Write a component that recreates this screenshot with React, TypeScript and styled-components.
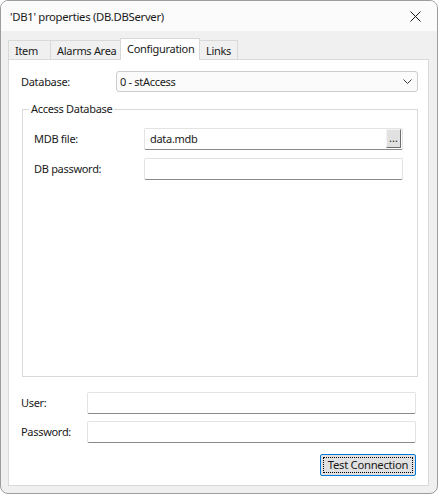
import React from "react";
import styled, { createGlobalStyle, css } from "styled-components";

const GlobalStyle = createGlobalStyle`
  html, body {
    margin: 0;
    padding: 0;
    background: #ffffff;
  }
  body {
    font-family: "Noto Sans", "Open Sans", sans-serif;
    font-size: 11px;
    letter-spacing: -0.3px;
    color: #000000;
  }
  * {
    box-sizing: border-box;
  }
`;

const Window = styled.div`
  width: 438px;
  height: 494px;
  display: flex;
  flex-direction: column;
  border: 1px solid #9d9d9d;
  border-radius: 8px;
  overflow: hidden;
  background: #f0f0f0;
`;

const TitleBar = styled.div`
  height: 30px;
  flex-shrink: 0;
  display: flex;
  align-items: center;
  justify-content: space-between;
  padding: 0 9px 0 9px;
  background: #fbfbfb;
`;

const Title = styled.span`
  font-size: 11.3px;
  color: #1a1a1a;
`;

const CloseButton = styled.div`
  width: 28px;
  height: 28px;
  display: flex;
  align-items: center;
  justify-content: center;
  margin-right: -1px;
`;

const Body = styled.div`
  flex: 1;
  display: flex;
  flex-direction: column;
  padding: 7px 8px 7px 7px;
`;

const TabStrip = styled.div`
  display: flex;
  align-items: flex-end;
  height: 21px;
  position: relative;
  z-index: 1;
`;

const Tab = styled.div<{ $active?: boolean; $width: number }>`
  width: ${({ $width }) => $width}px;
  height: 19px;
  display: flex;
  align-items: center;
  padding-left: 6px;
  border: 1px solid #d9d9d9;
  border-bottom: none;
  margin-right: -1px;
  background: #f0f0f0;
  white-space: nowrap;
  color: #1a1a1a;

  ${({ $active }) =>
    $active &&
    css`
      height: 22px;
      margin-bottom: -1px;
      background: #ffffff;
      position: relative;
      z-index: 2;
      padding-bottom: 3px;
    `}
`;

const Panel = styled.div`
  flex: 1;
  display: flex;
  flex-direction: column;
  border: 1px solid #d9d9d9;
  background: #ffffff;
  padding: 11px 10px 9px 12px;
`;

const Row = styled.div<{ $labelWidth: number; $gap?: number; $right?: number; $height?: number }>`
  display: grid;
  grid-template-columns: ${({ $labelWidth }) => $labelWidth}px 1fr;
  align-items: center;
  height: ${({ $height }) => $height ?? 22}px;
  margin-top: ${({ $gap }) => $gap ?? 0}px;
  margin-right: ${({ $right }) => $right ?? 0}px;
`;

const Label = styled.span`
  color: #1a1a1a;
  padding-bottom: 1px;
`;

const Select = styled.div`
  height: 21px;
  display: flex;
  align-items: center;
  justify-content: space-between;
  border: 1px solid #cccccc;
  border-radius: 3px;
  background: #fbfbfb;
  padding: 0 5px 1px 3px;
  color: #1a1a1a;
`;

const TextBox = styled.div`
  height: 22px;
  position: relative;
  display: flex;
  align-items: center;
  border: 1px solid #e3e3e3;
  border-bottom-color: #8a8a8a;
  border-radius: 2px;
  background: #ffffff;
  padding: 0 5px 1px 5px;
  color: #1a1a1a;
`;

const BrowseButton = styled.div`
  position: absolute;
  right: 1px;
  top: 0;
  width: 15px;
  height: 19px;
  background: #e1e1e1;
  border: 1px solid;
  border-color: #f4f4f4 #6e6e6e #6e6e6e #f4f4f4;
  display: flex;
  align-items: flex-end;
  justify-content: center;
  font-size: 11px;
  line-height: 1;
  padding-bottom: 4px;
  letter-spacing: 0;
  color: #1a1a1a;
`;

const GroupBox = styled.div`
  flex: 1;
  position: relative;
  margin: 17px 0 0 1px;
  border: 1px solid #d9d9d9;
  padding: 18px 14px 0 11px;
`;

const GroupTitle = styled.span`
  position: absolute;
  top: -9px;
  left: 6px;
  padding: 0 2px;
  background: #ffffff;
  color: #1a1a1a;
`;

const ButtonRow = styled.div`
  display: flex;
  justify-content: flex-end;
  margin: 11px 2px 0 0;
`;

const PushButton = styled.div`
  width: 96px;
  height: 22px;
  border: 1px solid #0078d7;
  border-radius: 2px;
  background: #e1e1e1;
  display: flex;
  align-items: center;
  justify-content: center;
  position: relative;
  color: #1a1a1a;
  font-size: 11.3px;
  padding-bottom: 1px;

  &::after {
    content: "";
    position: absolute;
    inset: 2px;
    border: 1px dotted #000000;
  }
`;

const CloseIcon = () => (
  <svg width="11" height="11" viewBox="0 0 11 11">
    <path d="M0.5 0.5 L10.5 10.5 M10.5 0.5 L0.5 10.5" stroke="#1a1a1a" strokeWidth="1" fill="none" />
  </svg>
);

const Chevron = () => (
  <svg width="9" height="5" viewBox="0 0 9 5">
    <path d="M0.5 0.5 L4.5 4.5 L8.5 0.5" stroke="#3c3c3c" strokeWidth="1" fill="none" />
  </svg>
);

const tabs = [
  { name: "Item", width: 43 },
  { name: "Alarms Area", width: 71 },
  { name: "Configuration", width: 80, active: true },
  { name: "Links", width: 39 },
];

export default function App() {
  return (
    <>
      <GlobalStyle />
      <Window>
        <TitleBar>
          <Title>'DB1' properties (DB.DBServer)</Title>
          <CloseButton>
            <CloseIcon />
          </CloseButton>
        </TitleBar>
        <Body>
          <TabStrip>
            {tabs.map((t) => (
              <Tab key={t.name} $width={t.width} $active={t.active}>
                {t.name}
              </Tab>
            ))}
          </TabStrip>
          <Panel>
            <Row $labelWidth={95} $height={21}>
              <Label>Database:</Label>
              <Select>
                <span>0 - stAccess</span>
                <Chevron />
              </Select>
            </Row>

            <GroupBox>
              <GroupTitle>Access Database</GroupTitle>
              <Row $labelWidth={110}>
                <Label>MDB file:</Label>
                <TextBox>
                  data.mdb
                  <BrowseButton>...</BrowseButton>
                </TextBox>
              </Row>
              <Row $labelWidth={110} $gap={8}>
                <Label>DB password:</Label>
                <TextBox />
              </Row>
            </GroupBox>

            <Row $labelWidth={66} $gap={15} $right={2}>
              <Label>User:</Label>
              <TextBox />
            </Row>
            <Row $labelWidth={66} $gap={7} $right={2}>
              <Label>Password:</Label>
              <TextBox />
            </Row>
            <ButtonRow>
              <PushButton>Test Connection</PushButton>
            </ButtonRow>
          </Panel>
        </Body>
      </Window>
    </>
  );
}
